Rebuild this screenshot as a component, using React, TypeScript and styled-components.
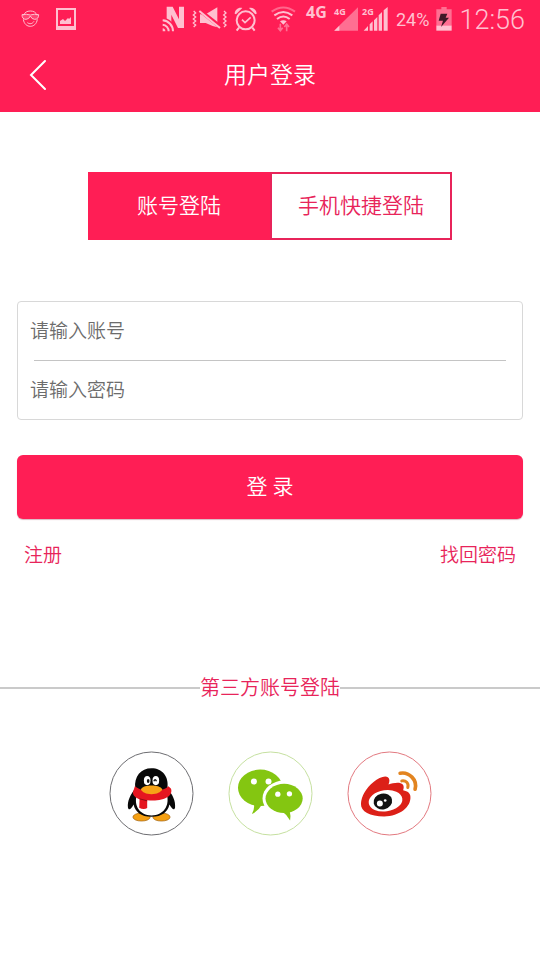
import React, { useState } from "react";
import styled, { createGlobalStyle } from "styled-components";

const brand = "#ff1e55";
const brandText = "#e8245a";
const statusInk = "#ffc0d0";

const GlobalStyle = createGlobalStyle`
  *, *::before, *::after { box-sizing: border-box; }
  body {
    margin: 0;
    background: #fff;
    font-family: Roboto, "Noto Sans CJK SC", sans-serif;
    font-weight: 350;
  }
  button, input { font-family: inherit; font-weight: inherit; margin: 0; }
`;

const Page = styled.div`
  display: flex;
  flex-direction: column;
  min-height: 100vh;
  background: #fff;
`;

const TopArea = styled.header`
  background: ${brand};
  color: #fff;
`;

const StatusBar = styled.div`
  display: flex;
  align-items: center;
  justify-content: space-between;
  height: 38px;
  padding: 0 15px 0 21px;
  color: ${statusInk};
`;

const StatusGroup = styled.div<{ $gap: number }>`
  display: flex;
  align-items: center;
  gap: ${(p) => p.$gap}px;
  svg { display: block; flex: none; }
`;

const NetworkType = styled.span`
  align-self: flex-start;
  width: 21px;
  font: 700 16px/20px "Noto Sans", sans-serif;
`;

const SignalSlot = styled.span`
  position: relative;
  display: block;
`;

const SignalTag = styled.span`
  position: absolute;
  top: 0;
  left: 0;
  font: 700 9px/9px "Noto Sans", sans-serif;
`;

const BatteryLevel = styled.span`
  font-size: 18px;
  line-height: 24px;
  font-weight: 400;
  padding-top: 2px;
`;

const Clock = styled.time`
  font-size: 27px;
  line-height: 32px;
  font-weight: 300;
  padding-top: 2px;
`;

const TitleBar = styled.div`
  display: grid;
  grid-template-columns: 76px 1fr 76px;
  align-items: center;
  height: 74px;
`;

const BackButton = styled.button`
  display: flex;
  align-items: center;
  justify-content: center;
  height: 74px;
  padding: 0;
  border: 0;
  background: none;
  color: #fff;
`;

const Title = styled.h1`
  margin: 0;
  padding-top: 2px;
  text-align: center;
  font-size: 23px;
  line-height: 32px;
  font-weight: inherit;
`;

const Content = styled.main`
  display: flex;
  flex-direction: column;
  padding-top: 60px;
`;

const Tabs = styled.div`
  display: grid;
  grid-template-columns: 1fr 1fr;
  margin: 0 88px;
`;

const Tab = styled.button<{ $active: boolean }>`
  height: 68px;
  padding: 0;
  border: 2px solid ${(p) => (p.$active ? brand : brandText)};
  font-size: 21px;
  line-height: 32px;
  background: ${(p) => (p.$active ? brand : "#fff")};
  color: ${(p) => (p.$active ? "#fff" : brandText)};
`;

const LoginForm = styled.form`
  display: flex;
  flex-direction: column;
  margin: 61px 17px 0;
`;

const FieldBox = styled.div`
  border: 1px solid #d8d8d8;
  border-radius: 4px;
`;

const Field = styled.input`
  display: block;
  width: 100%;
  height: 58px;
  padding: 0 12px;
  border: 0;
  background: none;
  outline: none;
  font-size: 19px;
  color: #333;
  &::placeholder { color: #6c6c6c; opacity: 1; }
`;

const FieldRule = styled.hr`
  height: 1px;
  margin: 0 16px;
  border: 0;
  background: #c4c4c4;
`;

const SubmitButton = styled.button`
  height: 64px;
  margin-top: 35px;
  padding: 0;
  border: 0;
  border-radius: 6px;
  background: ${brand};
  box-shadow: 0 1px 1px #d9b8c2;
  color: #fff;
  font-size: 21px;
  line-height: 32px;
`;

const LinkRow = styled.nav`
  display: flex;
  justify-content: space-between;
  padding: 21px 24px 0;
`;

const TextLink = styled.a`
  color: ${brandText};
  text-decoration: none;
  font-size: 19px;
  line-height: 32px;
`;

const SectionTitle = styled.h2`
  display: flex;
  align-items: center;
  margin: 100px 0 0;
  color: ${brandText};
  font-size: 20px;
  line-height: 32px;
  font-weight: inherit;
  &::before, &::after {
    content: "";
    flex: 1;
    height: 2px;
    background: #cacaca;
  }
`;

const Providers = styled.div`
  display: flex;
  justify-content: center;
  gap: 34px;
  margin-top: 47px;
`;

const ProviderButton = styled.button`
  width: 85px;
  height: 85px;
  padding: 0;
  border: 0;
  border-radius: 50%;
  background: none;
  svg { display: block; width: 100%; height: 100%; }
`;

const FaceIcon = () => (
  <svg width="19" height="18" viewBox="0 0 57 54" fill="none" stroke="currentColor" strokeWidth="3">
    <path d="M8 16C11 7 18 3 28 3s17 4 20 13" />
    <path fill={statusInk} fillOpacity="0.25" d="M3 14q13-3 25 1q12-4 25-1q0 14-12 14q-9 0-13-10q-4 10-13 10Q3 28 3 14z" />
    <path d="M7 28c2 14 11 21 21 21s19-7 21-21M19 38c7 5 15 4 20-4" />
  </svg>
);

const GalleryIcon = () => (
  <svg width="22" height="22" viewBox="0 0 22 22">
    <path fill="currentColor" fillRule="evenodd" d="M1 0h20v22H1zM3 2v16h16V2z" />
    <path fill="currentColor" d="M5 16v-3l3-2 2 2 3-3 1 1 2-2v7z" />
  </svg>
);

const NfcIcon = () => (
  <svg width="23" height="26" viewBox="0 0 69 78">
    <path fill="currentColor" d="M14 2h18l19 38V2h15v64H48L28 26v30H14z" />
    <circle cx="0" cy="76" r="41" fill={brand} />
    <g fill="none" stroke="currentColor" strokeWidth="6">
      <path d="M2 43a33 33 0 0 1 31 33M2 56a20 20 0 0 1 18 20" />
    </g>
    <path fill="currentColor" d="M2 67a9 9 0 0 1 8 9H2z" />
  </svg>
);

const MuteIcon = () => (
  <svg width="35" height="24" viewBox="0 0 105 72">
    <path fill="currentColor" d="M24 22h17L76 1v60L62 57 41 48H24z" />
    <path stroke={brand} strokeWidth="12" d="M22 9l66 53" />
    <g fill="none" stroke="currentColor" strokeWidth="4">
      <path strokeWidth="6" d="M22 12l62 51" />
      <path d="M5 12l6 6-7 6 7 6-7 6 7 6-7 6 7 6-6 6M96 12l6 6-7 6 7 6-7 6 7 6-7 6 7 6-6 6" />
    </g>
  </svg>
);

const AlarmIcon = () => (
  <svg width="25" height="26" viewBox="0 0 75 78" fill="none" stroke="currentColor">
    <circle cx="35" cy="43" r="27" strokeWidth="6" />
    <path strokeWidth="5" d="M24 41l9 9 17-16" />
    <path fill="currentColor" stroke="none" d="M2 23C3 11 13 3 25 6L6 25zM68 23C67 11 57 3 45 6l19 19z" />
    <path strokeWidth="6" d="M15 65l-7 9M55 65l7 9" />
  </svg>
);

const WifiIcon = () => (
  <svg width="33" height="26" viewBox="0 0 99 78" fill="none" stroke="currentColor">
    <path strokeWidth="6" opacity="0.45" d="M17 17q35-25 70 0" />
    <path strokeWidth="6" d="M25 28q27-20 54 0M33 39q19-15 38 0" />
    <path fill="currentColor" stroke="none" d="M42 46q10-7 20 0L52 56z" />
    <path strokeWidth="5" opacity="0.5" d="M43 53v19M36 65l7 9 7-9M62 76V56M55 63l7-9 7 9" />
  </svg>
);

const WeakSignalIcon = () => (
  <svg width="24" height="24" viewBox="0 0 72 72">
    <path fill="currentColor" opacity="0.5" d="M72 1v70H0z" />
    <path fill="currentColor" d="M16 56v15H1z" />
  </svg>
);

const SignalIcon = () => (
  <svg width="27" height="24" viewBox="0 0 81 72">
    <path
      fill="currentColor"
      d="M18 57v14H5zM23 52l9-9v28h-9zM36 40l10-10v41H36zM50 25l10-10v56H50zM65 10L77 0v71H65z"
    />
  </svg>
);

const BatteryIcon = () => (
  <svg width="16" height="24" viewBox="0 0 48 72">
    <path fill="currentColor" opacity="0.5" d="M16 0h16v7h15v50H1V7h15z" />
    <path fill="currentColor" d="M1 56h46v15H1z" />
    <path fill="#401827" d="M14 20h20l-5 12h10L15 60l6-19H8z" />
  </svg>
);

const BackIcon = () => (
  <svg width="18" height="32" viewBox="0 0 18 32" fill="none" stroke="currentColor" strokeWidth="2" strokeLinecap="round">
    <path d="M16 2L2 16l14 14" />
  </svg>
);

const QqLogo = () => (
  <svg viewBox="26 19 256 256">
    <circle cx="154" cy="147" r="125" fill="#fff" stroke="#6c6c70" strokeWidth="3" />
    <ellipse cx="124" cy="218" rx="26" ry="12" fill="#f5a012" stroke="#9b5a08" strokeWidth="2" />
    <ellipse cx="184" cy="218" rx="26" ry="12" fill="#f5a012" stroke="#9b5a08" strokeWidth="2" />
    <path
      fill="#080808"
      d="M105 132c-4-37 17-61 49-61s53 24 48 61c15 18 25 37 23 57-2 10-9 5-17-9-5 22-22 37-54 37s-49-15-54-37c-7 14-15 19-17 9-2-20 8-39 22-57z"
    />
    <path fill="#fff" d="M109 153h92c7 31-11 60-47 60s-53-29-45-60z" />
    <path fill="#e51620" d="M104 125c21 19 80 20 101 0l8 8c3 9-1 17-7 22-17 13-42 14-65 12v24c-6 4-16 4-24-1l1-26c-11-4-20-10-20-21z" />
    <path fill="none" stroke="#8e0a13" strokeWidth="3" d="M118 163l23 6" />
    <path fill="#f6a317" d="M122 135c5-10 18-12 32-12s28 3 33 12c-6 8-16 14-33 14s-28-6-32-14z" />
    <ellipse cx="141" cy="108" rx="10" ry="14" fill="#fff" />
    <ellipse cx="167" cy="108" rx="10" ry="14" fill="#fff" />
    <ellipse cx="144" cy="109" rx="4" ry="6" fill="#111" />
    <path fill="none" stroke="#111" strokeWidth="4" d="M161 110q4-9 8 0" />
  </svg>
);

const WechatLogo = () => (
  <svg viewBox="22 19 256 256">
    <circle cx="150" cy="147" r="125" fill="#fff" stroke="#c5e0a0" strokeWidth="3" />
    <ellipse cx="119" cy="130" rx="67" ry="55" fill="#84c611" />
    <path fill="#84c611" d="M100 178q3 15-6 31 19-9 31-30z" />
    <ellipse cx="191" cy="162" rx="65" ry="54" fill="#fff" />
    <ellipse cx="191" cy="162" rx="56" ry="44" fill="#84c611" />
    <path fill="#84c611" d="M186 202q14 9 23 26 3-13-1-27z" />
    <g fill="#fff">
      <circle cx="100" cy="111" r="9" />
      <circle cx="144" cy="111" r="9" />
      <circle cx="172" cy="149" r="8" />
      <circle cx="207" cy="148" r="8" />
    </g>
  </svg>
);

const WeiboLogo = () => (
  <svg viewBox="32 19 256 256">
    <circle cx="160" cy="147" r="125" fill="#fff" stroke="#e27880" strokeWidth="3" />
    <path
      fill="#dc2018"
      d="M74 178c1-24 16-48 38-66 15-13 35-20 43-14 6 4 6 13 2 22 14-5 35-9 43 0 4 5 3 12 1 17 14 3 22 9 22 20 2 31-33 59-79 59-43 0-71-14-70-38z"
    />
    <ellipse cx="148" cy="169" rx="51" ry="32" fill="#fff" transform="rotate(-8 148 169)" />
    <ellipse cx="140" cy="171" rx="28" ry="24" fill="#111" transform="rotate(-12 140 171)" />
    <circle cx="131" cy="177" r="9" fill="#fff" />
    <circle cx="147" cy="168" r="4" fill="#fff" />
    <g fill="none" stroke="#e28420" strokeLinecap="round">
      <path strokeWidth="11" d="M192 86c27-5 53 20 45 48" />
      <path strokeWidth="9" d="M197 109c12-2 22 7 18 20" />
    </g>
  </svg>
);

const tabs = ["账号登陆", "手机快捷登陆"];

const providers = [
  { name: "QQ", Logo: QqLogo },
  { name: "微信", Logo: WechatLogo },
  { name: "微博", Logo: WeiboLogo },
];

export default function App() {
  const [activeTab, setActiveTab] = useState(0);

  return (
    <Page>
      <GlobalStyle />
      <TopArea>
        <StatusBar>
          <StatusGroup $gap={15}>
            <FaceIcon />
            <GalleryIcon />
          </StatusGroup>
          <StatusGroup $gap={7}>
            <NfcIcon />
            <MuteIcon />
            <AlarmIcon />
            <WifiIcon />
            <NetworkType>4G</NetworkType>
            <StatusGroup $gap={4}>
              <SignalSlot>
                <WeakSignalIcon />
                <SignalTag>4G</SignalTag>
              </SignalSlot>
              <SignalSlot>
                <SignalIcon />
                <SignalTag>2G</SignalTag>
              </SignalSlot>
            </StatusGroup>
            <BatteryLevel>24%</BatteryLevel>
            <BatteryIcon />
            <Clock>12:56</Clock>
          </StatusGroup>
        </StatusBar>
        <TitleBar>
          <BackButton type="button" aria-label="返回">
            <BackIcon />
          </BackButton>
          <Title>用户登录</Title>
        </TitleBar>
      </TopArea>
      <Content>
        <Tabs role="tablist">
          {tabs.map((label, i) => (
            <Tab
              key={label}
              type="button"
              role="tab"
              aria-selected={activeTab === i}
              $active={activeTab === i}
              onClick={() => setActiveTab(i)}
            >
              {label}
            </Tab>
          ))}
        </Tabs>
        <LoginForm onSubmit={(e) => e.preventDefault()}>
          <FieldBox>
            <Field type="text" aria-label="账号" placeholder="请输入账号" />
            <FieldRule />
            <Field type="password" aria-label="密码" placeholder="请输入密码" />
          </FieldBox>
          <SubmitButton type="submit">登 录</SubmitButton>
        </LoginForm>
        <LinkRow>
          <TextLink href="#register">注册</TextLink>
          <TextLink href="#recover">找回密码</TextLink>
        </LinkRow>
        <SectionTitle>第三方账号登陆</SectionTitle>
        <Providers>
          {providers.map(({ name, Logo }) => (
            <ProviderButton key={name} type="button" aria-label={name}>
              <Logo />
            </ProviderButton>
          ))}
        </Providers>
      </Content>
    </Page>
  );
}
